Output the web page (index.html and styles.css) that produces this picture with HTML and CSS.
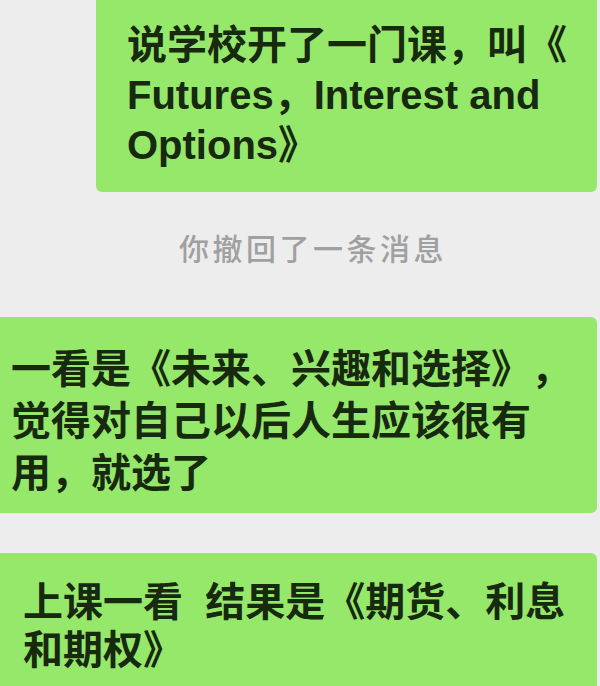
FILE: index.html
```html
<!DOCTYPE html>
<html lang="zh-CN">
<head>
<meta charset="utf-8">
<title>聊天记录</title>
<link rel="stylesheet" href="styles.css">
</head>
<body>
<main class="chat">
  <div class="bubble bubble-first">说学校开了一门课，叫《<br>Futures，Interest and<br>Options》</div>
  <div class="system">你撤回了一条消息</div>
  <div class="bubble bubble-second">一看是《未来、兴趣和选择》，<br>觉得对自己以后人生应该很有<br>用，就选了</div>
  <div class="bubble bubble-third">上课一看&nbsp; 结果是《期货、利息<br>和期权》</div>
</main>
</body>
</html>
```

FILE: styles.css
```css
html, body {
  margin: 0;
  padding: 0;
}
body {
  background: #ededed;
  width: 600px;
  height: 686px;
  overflow: hidden;
  font-family: "Liberation Sans", "Noto Sans CJK SC", sans-serif;
  text-spacing-trim: space-all;
}
.chat {
  display: flex;
  flex-direction: column;
  align-items: flex-end;
}
.bubble {
  background: #96e86b;
  color: #17290f;
  font-size: 40px;
  font-weight: 700;
  border-radius: 6px;
  box-sizing: border-box;
  white-space: nowrap;
}
.bubble-first {
  width: 501px;
  margin-right: 3px;
  margin-top: -10px;
  padding: 30px 0 22px 31px;
  line-height: 50px;
}
.system {
  align-self: stretch;
  text-align: center;
  color: #a0a0a0;
  font-family: "Noto Sans CJK SC", sans-serif;
  font-size: 30px;
  font-weight: 500;
  letter-spacing: 3.5px;
  line-height: 40px;
  margin: 35px 0 50px;
  padding-left: 26px;
}
.bubble-second {
  width: 597px;
  margin-right: 3px;
  padding: 26px 0 14px 11px;
  line-height: 52px;
  border-radius: 0 6px 6px 0;
}
.bubble-third {
  width: 597px;
  margin-right: 3px;
  margin-top: 40px;
  padding: 25px 0 20px 23px;
  line-height: 48px;
  border-radius: 0 6px 6px 0;
}
```
